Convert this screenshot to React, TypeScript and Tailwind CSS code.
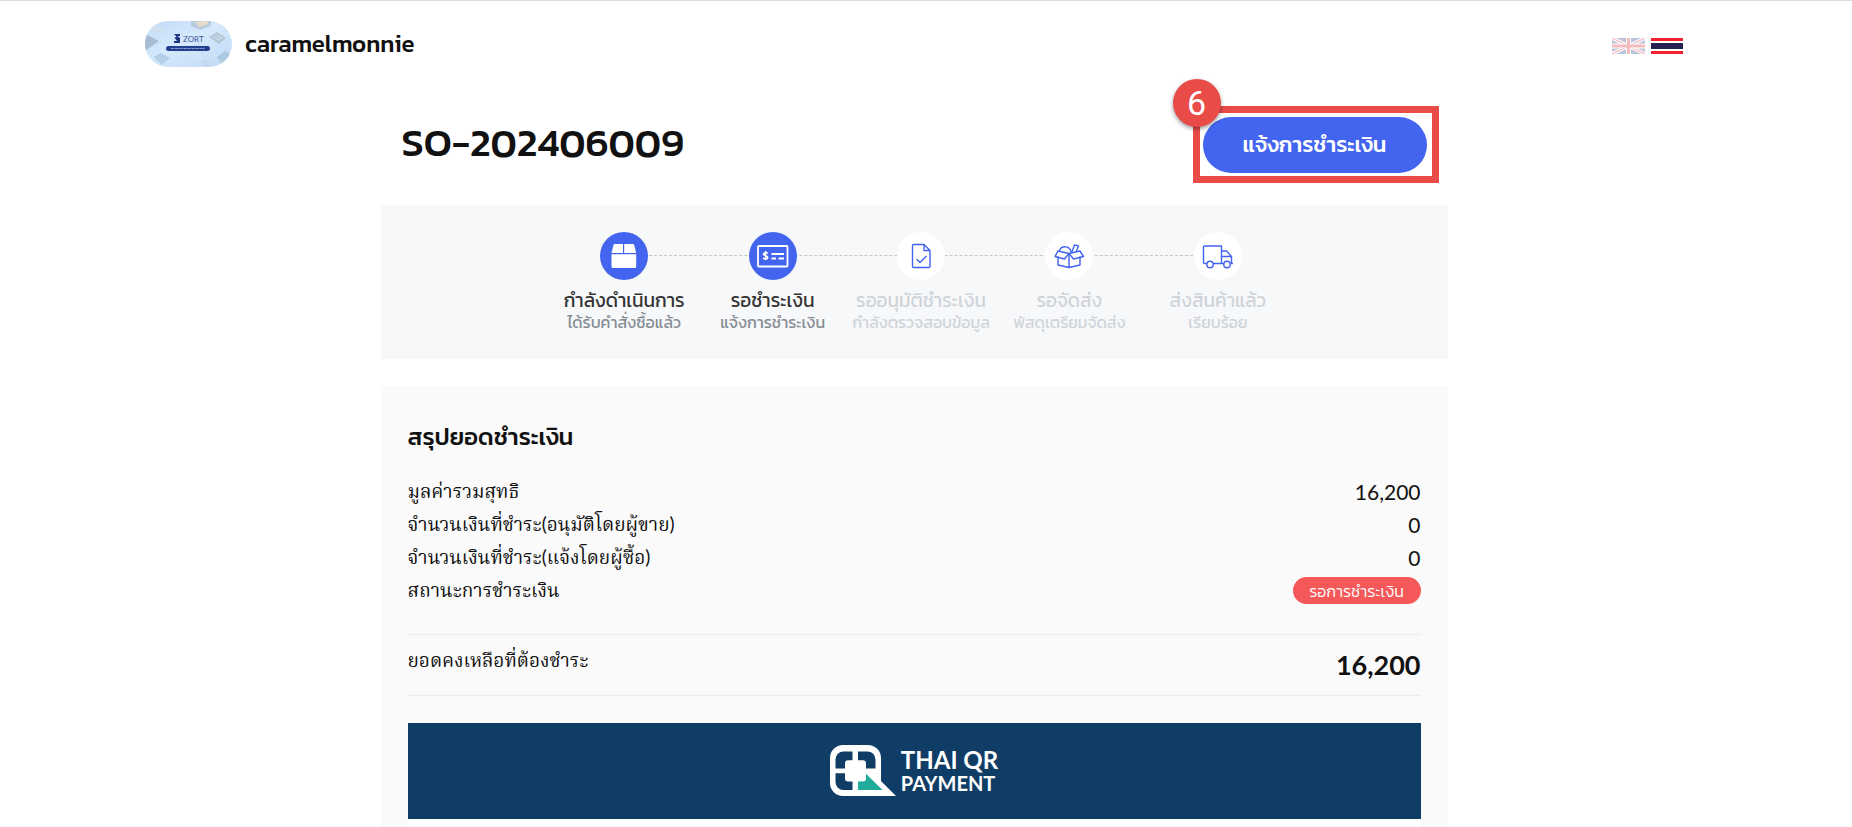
import type { ReactNode } from "react";

function ShopLogo() {
  return (
    <svg viewBox="0 0 87 46" className="h-[46px] w-[87px] rounded-full" role="img" aria-label="ZORT">
      <defs>
        <linearGradient id="sky" x1="0" y1="0" x2="1" y2="1">
          <stop offset="0" stopColor="#bfdaf5" />
          <stop offset="0.45" stopColor="#d6e9fc" />
          <stop offset="1" stopColor="#bfdaf5" />
        </linearGradient>
      </defs>
      <rect width="87" height="46" fill="url(#sky)" />
      <path d="M0 13l14 7-14 10z" fill="#a8bdd2" />
      <path d="M2 8l8-5 12 4-9 8z" fill="#cfe0f1" />
      <path d="M46 0h20v5l-11 4-9-4z" fill="#b9cbdd" />
      <path d="M50 1l11-1 3 3-10 3z" fill="#e6dcc9" />
      <path d="M64 16l8-5 9 6-7 6z" fill="#b5c6d6" />
      <path d="M67 16l5-3 6 4-4 3z" fill="#c9d8e6" />
      <path d="M70 14.500l7 4M68.500 17l4-3" stroke="#a9bccd" strokeWidth=".7" />
      <path d="M8 36l8-4 9 5-8 7z" fill="#b3cfea" />
      <path d="M72 36l8-6 7 4v9l-8 3z" fill="#aec8e2" />
      <path d="M55 40l6-2 6 4-5 4z" fill="#c6d9ec" />
      <path d="M29 13h6v2h-2.500l2.500 2v5h-6v-2h3l-2.500-3.200 2-1.300z" fill="#20377f" />
      <text x="38" y="21" fontSize="8" fill="#3f5795" fontFamily="Lato, sans-serif">ZORT</text>
      <rect x="21" y="25" width="44" height="5" rx="2.500" fill="#23408f" />
      <path d="M26 27.500h34" stroke="#8da3d4" strokeWidth="1.200" strokeDasharray="2 .6" />
    </svg>
  );
}

function FlagUK() {
  return (
    <svg viewBox="0 0 33 16" className="h-4 w-[33px] opacity-30" aria-hidden="true">
      <rect width="33" height="16" fill="#24408e" />
      <path d="M0 0l33 16M33 0L0 16" stroke="#fff" strokeWidth="3.500" />
      <path d="M0 0l33 16M33 0L0 16" stroke="#e0252f" strokeWidth="1.200" />
      <path d="M16.500 0v16M0 8h33" stroke="#fff" strokeWidth="5" />
      <path d="M16.500 0v16M0 8h33" stroke="#e0252f" strokeWidth="3.200" />
    </svg>
  );
}

function FlagTH() {
  return (
    <svg viewBox="0 0 32 16" className="h-4 w-8" aria-hidden="true">
      <rect width="32" height="16" fill="#f4222f" />
      <rect y="3" width="32" height="10" fill="#fff" />
      <rect y="5" width="32" height="6" fill="#262050" />
    </svg>
  );
}

const icons: Record<string, ReactNode> = {
  box: (
    <g fill="#fff">
      <path d="M14.500 12h8.500v9H11.500l2-8a1.500 1.500 0 0 1 1-1z" />
      <path d="M24.200 12H33a1.500 1.500 0 0 1 1.200 1l2 8h-12z" />
      <path d="M11.500 22.200h24.700v12.300a1.500 1.500 0 0 1-1.500 1.500h-21.700a1.500 1.500 0 0 1-1.500-1.500z" />
    </g>
  ),
  check: (
    <g fill="none" stroke="#fff" strokeWidth="1.800">
      <rect x="9" y="14" width="29.500" height="20.500" rx="1" />
      <path d="M22.500 22h12.500M22.500 26.500h4.500M29.500 26.500h5.500" />
      <path d="M18.700 21.500c-1-1.200-4.200-1.200-4.200.6 0 2 4.200 1.200 4.200 3.400 0 2-3.800 1.800-4.500.4M16.600 19v9" strokeWidth="1.600" />
    </g>
  ),
  doc: (
    <g fill="none" stroke="#4264ee" strokeWidth="1.400" strokeLinejoin="round">
      <path d="M27 12.500H16.500a1 1 0 0 0-1 1v21a1 1 0 0 0 1 1h15.500a1 1 0 0 0 1-1V18.500z" />
      <path d="M27 12.500v6h6M19.500 27l3.500 3.500 6.500-6.500" />
    </g>
  ),
  gift: (
    <g fill="none" stroke="#4264ee" strokeWidth="1.400" strokeLinejoin="round" strokeLinecap="round">
      <path d="M24 21.500v14l-11-2.500v-8M24 35.500l11-2.500v-8" />
      <path d="M24 21.500l-11-2.500-3 5.500 9.500 2.500zM24 21.500l11-2.500 3.500 5.500-10 2.500z" />
      <path d="M14.500 18.500a6 6 0 0 1 11.500 1.500M27 19.500l2.500-6.500 4 1-2 5" />
    </g>
  ),
  truck: (
    <g fill="none" stroke="#4264ee" strokeWidth="1.400" strokeLinejoin="round">
      <path d="M13 31.500h-2.500a1 1 0 0 1-1-1v-15.500a1 1 0 0 1 1-1h17v17.500h-8.500M27.500 31.500h2.500M36.500 31.500h2.500M27.500 19h5l5 5.500v7M37.500 24.500H27.500" />
      <circle cx="16" cy="32.500" r="3.200" />
      <circle cx="33" cy="32.500" r="3.200" />
    </g>
  ),
};

const steps = [
  { icon: "box", title: "กำลังดำเนินการ", note: "ได้รับคำสั่งซื้อแล้ว", active: true },
  { icon: "check", title: "รอชำระเงิน", note: "แจ้งการชำระเงิน", active: true },
  { icon: "doc", title: "รออนุมัติชำระเงิน", note: "กำลังตรวจสอบข้อมูล", active: false },
  { icon: "gift", title: "รอจัดส่ง", note: "พัสดุเตรียมจัดส่ง", active: false },
  { icon: "truck", title: "ส่งสินค้าแล้ว", note: "เรียบร้อย", active: false },
];

const rows = [
  { label: "มูลค่ารวมสุทธิ", value: "16,200" },
  { label: "จำนวนเงินที่ชำระ(อนุมัติโดยผู้ขาย)", value: "0" },
  { label: "จำนวนเงินที่ชำระ(แจ้งโดยผู้ซื้อ)", value: "0" },
];

function QrMark() {
  return (
    <svg viewBox="0 0 66 52" className="h-[52px] w-[66px]" aria-hidden="true">
      <path d="M13 0h25a13 13 0 0 1 13 13v23l15 15H13A13 13 0 0 1 0 38V13A13 13 0 0 1 13 0z" fill="#fff" />
      <path d="M13.500 6.500h9v17H5.500v-9a8 8 0 0 1 8-8zM28 6.500h9.500a8 8 0 0 1 8 8v9H28zM5.500 28.300h17V45h-9a8 8 0 0 1-8-8z" fill="#0f3d66" />
      <path d="M28 28.300h7.500L52.500 45H28z" fill="#1fab9a" />
      <rect x="15" y="15.300" width="21" height="21.200" rx="3" fill="#fff" />
    </svg>
  );
}

export default function App() {
  return (
    <div className="min-h-screen border-t border-[#dedede] bg-white pr-[24px] font-['Kanit','Noto_Sans_Thai','Noto_Sans',sans-serif] text-[#111]">
      <header className="mx-auto flex h-[86px] max-w-[1538px] items-center justify-between">
        <a href="#" className="flex items-center gap-[13px]">
          <ShopLogo />
          <span className="text-[24px] font-medium">caramelmonnie</span>
        </a>
        <nav className="flex gap-[6px] pt-1">
          <button aria-label="English"><FlagUK /></button>
          <button aria-label="ไทย"><FlagTH /></button>
        </nav>
      </header>

      <main className="mx-auto max-w-[1067px]">
        <div className="flex h-[118px] items-start justify-between pt-[19px] pr-[9px] pl-[21px]">
          <h1 className="pt-[9px] text-[40px] leading-[54px] font-medium">SO-202406009</h1>
          <div className="relative border-[7px] border-[#e84b48] pt-1 pr-[5px] pb-[3px] pl-[3px]">
            <button className="block h-[56px] w-[224px] rounded-full bg-[#4264ee] pb-[2px] text-[22px] font-medium text-white">แจ้งการชำระเงิน</button>
            <span className="absolute -top-[34px] -left-[27px] flex size-[48px] items-center justify-center rounded-full bg-[#e84b48] font-['Roboto',sans-serif] text-[34px] leading-none text-white shadow-[0_2px_4px_rgba(0,0,0,0.4)]">6</span>
          </div>
        </div>

        <section className="h-[154px] bg-[#f7f8fa] pt-[27px]">
          <ol className="relative mx-auto flex w-[756px] pl-[14px]">
            <li aria-hidden="true" className="absolute top-[23px] right-[74px] left-[88px] border-t border-dashed border-[#c4c6c8]" />
            {steps.map((step) => (
              <li key={step.icon} className={step.active ? "relative flex-1 text-center text-[#333]" : "relative flex-1 text-center text-[#cfd4d9]"}>
                <span className={step.active ? "mx-auto block size-[48px] rounded-full bg-[#4264ee]" : "mx-auto block size-[48px] rounded-full bg-white"}>
                  <svg viewBox="0 0 48 48" className="size-[48px]" aria-hidden="true">{icons[step.icon]}</svg>
                </span>
                <p className="mt-[9px] text-[19px] leading-[23px] whitespace-nowrap">{step.title}</p>
                <p className={step.active ? "text-[16px] leading-[20px] whitespace-nowrap text-[#868c92]" : "text-[16px] leading-[20px] whitespace-nowrap"}>{step.note}</p>
              </li>
            ))}
          </ol>
        </section>

        <section className="mt-[27px] bg-[#fafafa] px-[27px] pt-[33px]">
          <h2 className="text-[24px] leading-[36px] font-medium">สรุปยอดชำระเงิน</h2>
          <dl className="mt-[19px] font-['Lato','Noto_Serif_Thai',serif] text-[19px] leading-[33px]">
            {rows.map((row) => (
              <div key={row.label} className="flex h-[33px] justify-between">
                <dt>{row.label}</dt>
                <dd className="text-[21px] leading-[35px]">{row.value}</dd>
              </div>
            ))}
            <div className="flex h-[33px] items-center justify-between">
              <dt>สถานะการชำระเงิน</dt>
              <dd className="mt-[2px] flex h-[27px] w-[128px] items-center justify-center rounded-full bg-[#f55858] pt-[2px] font-['Kanit','Noto_Sans',sans-serif] text-[16px] font-light text-white">รอการชำระเงิน</dd>
            </div>
            <div className="mt-[28px] flex h-[62px] justify-between border-y border-[#ececec] pt-[8px]">
              <dt>ยอดคงเหลือที่ต้องชำระ</dt>
              <dd className="pt-[5px] text-[27px] font-bold">16,200</dd>
            </div>
          </dl>
          <div className="mt-[27px] flex h-[96px] items-center justify-center gap-[5px] bg-[#0f3d66] text-white">
            <QrMark />
            <div className="font-['Lato',sans-serif] font-bold">
              <p className="text-[24px] leading-[24px]">THAI QR</p>
              <p className="text-[20px] leading-[22px]">PAYMENT</p>
            </div>
          </div>
          <div className="h-[8px] bg-white" />
        </section>
      </main>
    </div>
  );
}
